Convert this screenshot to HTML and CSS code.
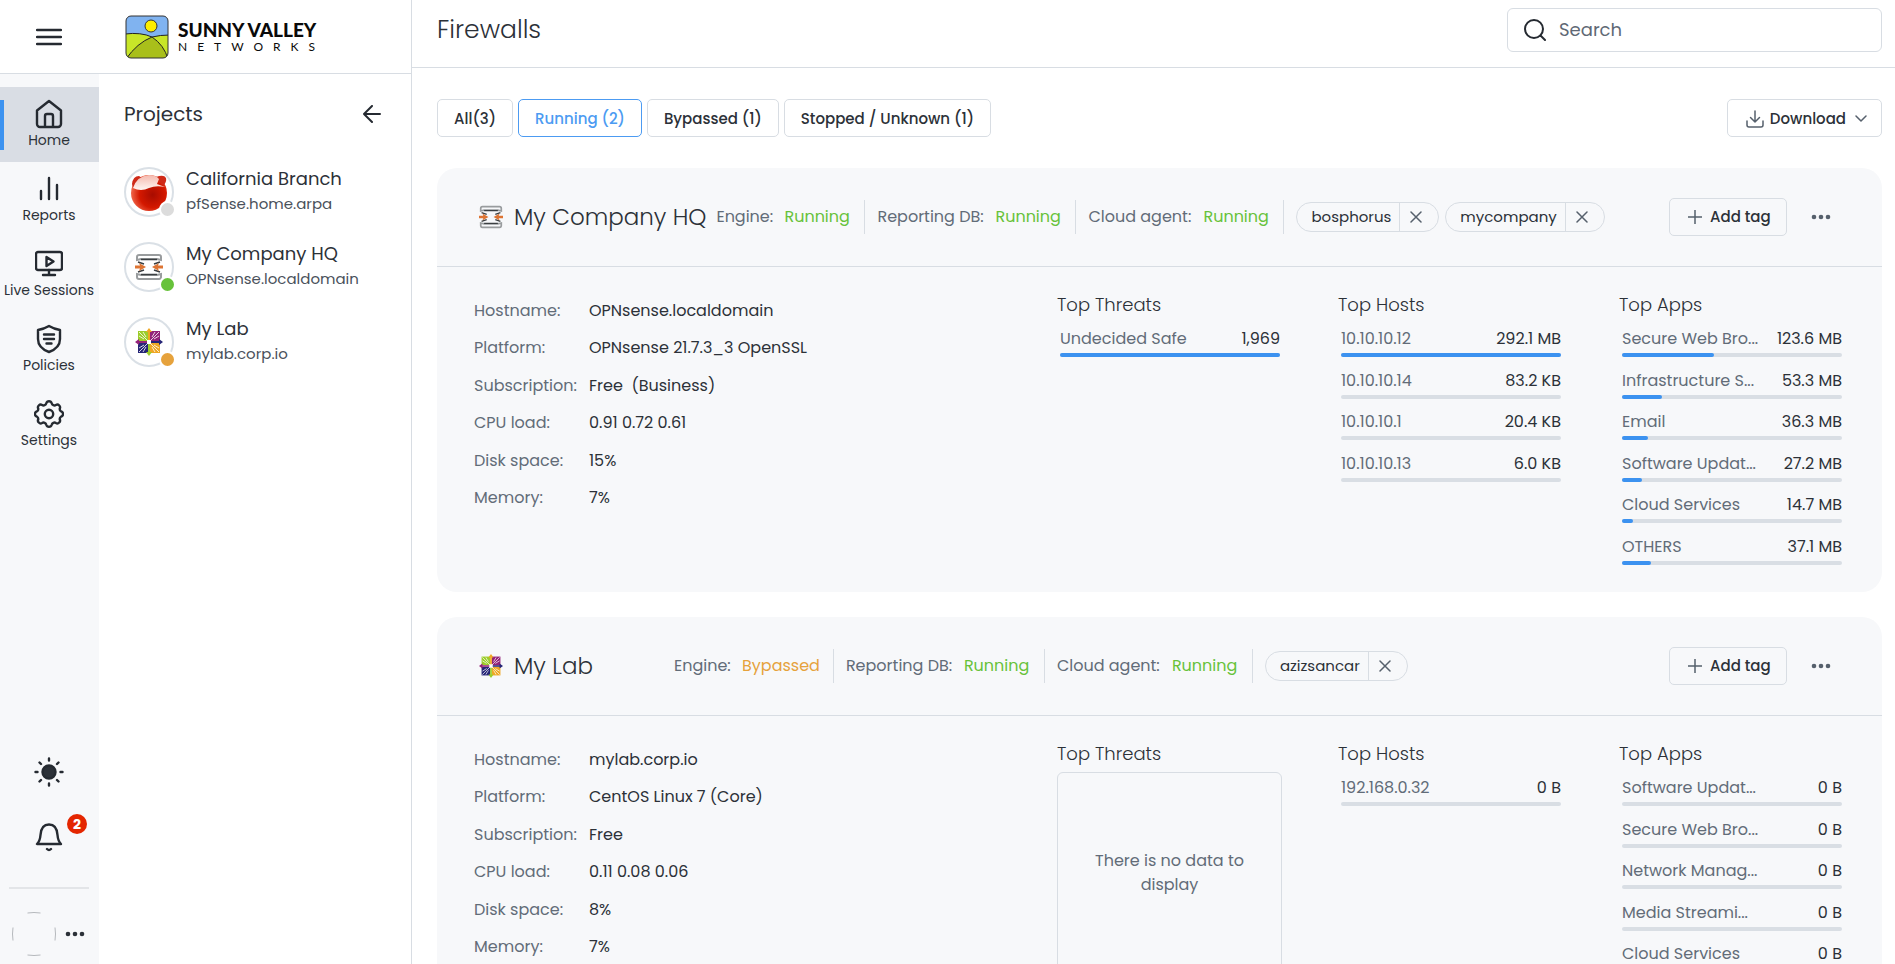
FILE: index.html
```
<!DOCTYPE html>
<html lang="en">
<head>
    <meta charset="UTF-8">
    <meta name="viewport" content="width=device-width, initial-scale=1.0">
    <title>Firewalls</title>
    <link rel="stylesheet" href="styles.css">
</head>
<body>
    <!-- shared icons -->
    <svg class="sprite" aria-hidden="true">
        <symbol id="i-close" viewBox="0 0 12 12"><path d="M1 1l10 10M11 1L1 11"/></symbol>
        <symbol id="i-plus" viewBox="0 0 14 14"><path d="M7 0v14M0 7h14"/></symbol>
        <symbol id="i-dots" viewBox="0 0 20 6">
            <circle cx="3" cy="3" r="2.300"/><circle cx="10" cy="3" r="2.300"/><circle cx="17" cy="3" r="2.300"/>
        </symbol>
        <symbol id="i-opnsense" viewBox="0 0 28 28">
            <g fill="none" stroke="#999c9e" stroke-width="2">
                <path d="M2 7V4q0-2 2-2h20q2 0 2 2v3l-4-1H6z"/>
                <path d="M2 21v3q0 2 2 2h20q2 0 2-2v-3l-4 1H6z"/>
            </g>
            <g fill="none" stroke="#3b3f42" stroke-width="1.600">
                <path d="M6 6.500h16M6 21.500h16M3 9l6 2M3 19l6-2M25 9l-6 2M25 19l-6-2"/>
            </g>
            <path fill="#dd7433" d="M0 12.500h5L4 10l7 4-7 4 1-2.500H0zM28 12.500h-5l1-2.500-7 4 7 4-1-2.500h5z"/>
        </symbol>
        <symbol id="i-centos" viewBox="0 0 28 28">
            <path fill="#9ccd2a" d="M3 3h10v10H3z"/>
            <path fill="#932279" d="M15 3h10v10H15z"/>
            <path fill="#262577" d="M3 15h10v10H3z"/>
            <path fill="#efa724" d="M15 15h10v10H15z"/>
            <path fill="none" stroke="#fff" stroke-width="0.800" d="M4 4l20 20M24 4L4 24M8 4l3 5M20 4l-3 5M4 8l5 3M24 8l-5 3M4 20l5-3M24 20l-5-3M8 24l3-5M20 24l-3-5"/>
            <path fill="#efa724" d="M14 0l3 4h-2v9h-2V4h-2z"/>
            <path fill="#262577" d="M28 14l-4 3v-2h-9v-2h9v-2z"/>
            <path fill="#9ccd2a" d="M14 28l-3-4h2v-9h2v9h2z"/>
            <path fill="#932279" d="M0 14l4-3v2h9v2H4v2z"/>
            <path fill="#fff" d="M12 12h4v4h-4z"/>
        </symbol>
    </svg>

    <div class="app">
        <!-- left side -->
        <aside class="sidebar">
            <div class="brand">
                <button class="icon-btn menu-btn" aria-label="Menu">
                    <svg class="icon" width="26" height="20" viewBox="0 0 26 20"><path d="M1 3h24M1 10h24M1 17h24"/></svg>
                </button>
                <a class="logo" href="#">
                    <svg width="44" height="44" viewBox="0 0 44 44">
                        <defs><clipPath id="logoClip"><rect x="1" y="1" width="42" height="42" rx="5"/></clipPath></defs>
                        <g clip-path="url(#logoClip)">
                            <path fill="#80b3f0" d="M0 0h44v44H0z"/>
                            <path fill="#c8e628" stroke="#222" stroke-width="1" d="M0 19q16-2 27 3 8-2 18-2v25H0z"/>
                            <path fill="#a9bf1a" stroke="#222" stroke-width="1" d="M1 44Q12 28 27 22q12 8 16 22z"/>
                        </g>
                        <circle cx="26" cy="11" r="6" fill="#fdee00" stroke="#333"/>
                        <rect x="1" y="1" width="42" height="42" rx="5" fill="none" stroke="#333"/>
                    </svg>
                    <span class="logo-text">
                        <span class="logo-name">SUNNY VALLEY</span>
                        <span class="logo-sub">NETWORKS</span>
                    </span>
                </a>
            </div>

            <div class="side-body">
                <nav class="rail">
                    <a class="rail-item active" href="#">
                        <svg class="icon" width="28" height="30" viewBox="0 0 28 30"><path d="M2 11.500L14 2l12 9.500V25a3 3 0 0 1-3 3H5a3 3 0 0 1-3-3zM10 28V17a2 2 0 0 1 2-2h4a2 2 0 0 1 2 2v11"/></svg>
                        <span>Home</span>
                    </a>
                    <a class="rail-item" href="#">
                        <svg class="icon" width="28" height="30" viewBox="0 0 28 30"><path d="M6 17v8M14 4v21M22 11v14"/></svg>
                        <span>Reports</span>
                    </a>
                    <a class="rail-item" href="#">
                        <svg class="icon" width="28" height="30" viewBox="0 0 28 30"><rect x="1" y="3" width="26" height="18" rx="2"/><path d="M14 21v5M8 26h12M11.500 8v9l7-4.500z"/></svg>
                        <span>Live Sessions</span>
                    </a>
                    <a class="rail-item" href="#">
                        <svg class="icon" width="28" height="30" viewBox="0 0 28 30"><path d="M14 2Q19 5 25 6v9q0 9-11 13Q3 24 3 15V6q6-1 11-4zM9 10.500h10M9 15h10M11.500 19.500h5"/></svg>
                        <span>Policies</span>
                    </a>
                    <a class="rail-item" href="#">
                        <svg class="icon" width="30" height="30" viewBox="0 0 30 30"><circle cx="15" cy="15" r="4.200"/><path d="M12.300 4.300a2.800 2.800 0 0 1 5.400 0 2.800 2.800 0 0 0 4.200 1.700 2.800 2.800 0 0 1 3.800 3.800 2.800 2.800 0 0 0 1.300 2.500 2.800 2.800 0 0 1 0 5.400 2.800 2.800 0 0 0-1.300 2.500 2.800 2.800 0 0 1-3.800 3.800 2.800 2.800 0 0 0-4.200 1.700 2.800 2.800 0 0 1-5.400 0 2.800 2.800 0 0 0-4.200-1.700 2.800 2.800 0 0 1-3.800-3.800A2.800 2.800 0 0 0 3 17.700a2.800 2.800 0 0 1 0-5.400 2.800 2.800 0 0 0 1.300-2.500 2.800 2.800 0 0 1 3.800-3.800 2.800 2.800 0 0 0 4.200-1.700z"/></svg>
                        <span>Settings</span>
                    </a>

                    <div class="rail-bottom">
                        <button class="icon-btn" aria-label="Theme">
                            <svg class="icon" width="32" height="32" viewBox="0 0 32 32"><circle cx="16" cy="16" r="6.500" fill="currentColor"/><path d="M16 2.500v2M16 27.500v2M2.500 16h2M27.500 16h2M6.500 6.500l1.500 1.500M24 24l1.500 1.500M25.500 6.500L24 8M8 24l-1.500 1.500"/></svg>
                        </button>
                        <button class="icon-btn bell-btn" aria-label="Notifications">
                            <svg class="icon" width="28" height="30" viewBox="0 0 28 30"><path d="M2 22h24q-3-3-3.500-9C22 6 19 2.500 14 2.500S6 6 5.500 13Q5 19 2 22zM12 27q2 2 4 0"/></svg>
                            <span class="badge">2</span>
                        </button>
                        <div class="account">
                            <svg width="44" height="44" viewBox="0 0 44 44" fill="none" stroke="#b5b8bc"><path d="M15.500 1q6.500-1 13 0M15.500 43q6.500 1 13 0M1 15.500q-1 6.500 0 13M43 15.500q1 6.500 0 13"/></svg>
                            <button class="icon-btn" aria-label="Account menu"><svg class="dots" width="20" height="6"><use href="#i-dots"/></svg></button>
                        </div>
                    </div>
                </nav>

                <section class="projects">
                    <div class="projects-head">
                        <h2>Projects</h2>
                        <button class="icon-btn" aria-label="Collapse">
                            <svg class="icon" width="18" height="18" viewBox="0 0 18 18"><path d="M17 9H1M9 1L1 9l8 8"/></svg>
                        </button>
                    </div>
                    <a class="project" href="#">
                        <span class="avatar">
                            <svg width="38" height="38" viewBox="0 0 38 38">
                                <defs>
                                    <radialGradient id="ball" cx="0.600" cy="0.550" r="0.600"><stop offset="0" stop-color="#a80c00"/><stop offset="0.600" stop-color="#d41800"/><stop offset="1" stop-color="#f0664a"/></radialGradient>
                                    <linearGradient id="shine" x1="0" y1="0" x2="0" y2="1"><stop offset="0" stop-color="#f4b9ae"/><stop offset="1" stop-color="#fff6f2"/></linearGradient>
                                </defs>
                                <circle cx="19" cy="20" r="18" fill="url(#ball)"/>
                                <path fill="#cf2a18" d="M2 11Q3 3 9 3l3 2-9 10zM26 4q8-3 10 1 1 4-3 8z"/>
                                <path fill="url(#shine)" d="M3 15Q7 3 19 2q7 0 10 4l-2 5 8 3q-9-2-16 1-8 4-16 0z"/>
                            </svg>
                            <i class="dot offline"></i>
                        </span>
                        <span class="project-text"><b>California Branch</b><small>pfSense.home.arpa</small></span>
                    </a>
                    <a class="project" href="#">
                        <span class="avatar"><svg width="28" height="28"><use href="#i-opnsense"/></svg><i class="dot running"></i></span>
                        <span class="project-text"><b>My Company HQ</b><small>OPNsense.localdomain</small></span>
                    </a>
                    <a class="project" href="#">
                        <span class="avatar"><svg width="28" height="28"><use href="#i-centos"/></svg><i class="dot bypassed"></i></span>
                        <span class="project-text"><b>My Lab</b><small>mylab.corp.io</small></span>
                    </a>
                </section>
            </div>
        </aside>

        <!-- main content -->
        <main class="main">
            <header class="topbar">
                <h1>Firewalls</h1>
                <label class="search">
                    <svg class="icon" width="22" height="22" viewBox="0 0 22 22"><circle cx="10" cy="10" r="9"/><path d="M16.500 16.500L21 21"/></svg>
                    <input type="text" placeholder="Search" aria-label="Search">
                </label>
            </header>

            <div class="toolbar">
                <button class="btn">All(3)</button>
                <button class="btn selected">Running (2)</button>
                <button class="btn">Bypassed (1)</button>
                <button class="btn">Stopped / Unknown (1)</button>
                <button class="btn download">
                    <svg class="icon thin" width="18" height="18" viewBox="0 0 18 18"><path d="M9 1v11M4.500 7.500L9 12l4.500-4.500M1 11v4a2 2 0 0 0 2 2h12a2 2 0 0 0 2-2v-4"/></svg>
                    <span>Download</span>
                    <svg class="icon thin" width="12" height="8" viewBox="0 0 12 8"><path d="M1 1l5 5 5-5"/></svg>
                </button>
            </div>

            <article class="card">
                <header class="card-head">
                    <svg class="card-logo" width="24" height="24"><use href="#i-opnsense"/></svg>
                    <h2>My Company HQ</h2>
                    <div class="status"><span class="key engine">Engine:</span><span class="val is-running">Running</span></div>
                    <div class="status"><span class="key db">Reporting DB:</span><span class="val is-running">Running</span></div>
                    <div class="status"><span class="key agent">Cloud agent:</span><span class="val is-running">Running</span></div>
                    <div class="tag"><span>bosphorus</span><button aria-label="Remove bosphorus"><svg class="icon thin" width="12" height="12"><use href="#i-close"/></svg></button></div>
                    <div class="tag"><span>mycompany</span><button aria-label="Remove mycompany"><svg class="icon thin" width="12" height="12"><use href="#i-close"/></svg></button></div>
                    <button class="btn add-tag"><svg class="icon thin" width="14" height="14"><use href="#i-plus"/></svg>Add tag</button>
                    <button class="icon-btn more" aria-label="More"><svg class="dots" width="20" height="6"><use href="#i-dots"/></svg></button>
                </header>
                <div class="card-body">
                    <dl class="info">
                        <dt>Hostname:</dt><dd>OPNsense.localdomain</dd>
                        <dt>Platform:</dt><dd>OPNsense 21.7.3_3 OpenSSL</dd>
                        <dt>Subscription:</dt><dd>Free&nbsp; (Business)</dd>
                        <dt>CPU load:</dt><dd>0.91 0.72 0.61</dd>
                        <dt>Disk space:</dt><dd>15%</dd>
                        <dt>Memory:</dt><dd>7%</dd>
                    </dl>
                    <section class="top">
                        <h3>Top Threats</h3>
                        <ul>
                            <li><span>Undecided Safe</span><b>1,969</b><div class="bar"><i style="width: 100%"></i></div></li>
                        </ul>
                    </section>
                    <section class="top">
                        <h3>Top Hosts</h3>
                        <ul>
                            <li><span>10.10.10.12</span><b>292.1 MB</b><div class="bar"><i style="width: 100%"></i></div></li>
                            <li><span>10.10.10.14</span><b>83.2 KB</b><div class="bar"></div></li>
                            <li><span>10.10.10.1</span><b>20.4 KB</b><div class="bar"></div></li>
                            <li><span>10.10.10.13</span><b>6.0 KB</b><div class="bar"></div></li>
                        </ul>
                    </section>
                    <section class="top">
                        <h3>Top Apps</h3>
                        <ul>
                            <li><span>Secure Web Bro...</span><b>123.6 MB</b><div class="bar"><i style="width: 42%"></i></div></li>
                            <li><span>Infrastructure S...</span><b>53.3 MB</b><div class="bar"><i style="width: 18%"></i></div></li>
                            <li><span>Email</span><b>36.3 MB</b><div class="bar"><i style="width: 12%"></i></div></li>
                            <li><span>Software Updat...</span><b>27.2 MB</b><div class="bar"><i style="width: 9%"></i></div></li>
                            <li><span>Cloud Services</span><b>14.7 MB</b><div class="bar"><i style="width: 5%"></i></div></li>
                            <li><span>OTHERS</span><b>37.1 MB</b><div class="bar"><i style="width: 13%"></i></div></li>
                        </ul>
                    </section>
                </div>
            </article>

            <article class="card">
                <header class="card-head">
                    <svg class="card-logo" width="24" height="24"><use href="#i-centos"/></svg>
                    <h2>My Lab</h2>
                    <div class="status"><span class="key engine">Engine:</span><span class="val is-bypassed">Bypassed</span></div>
                    <div class="status"><span class="key db">Reporting DB:</span><span class="val is-running">Running</span></div>
                    <div class="status"><span class="key agent">Cloud agent:</span><span class="val is-running">Running</span></div>
                    <div class="tag"><span>azizsancar</span><button aria-label="Remove azizsancar"><svg class="icon thin" width="12" height="12"><use href="#i-close"/></svg></button></div>
                    <button class="btn add-tag"><svg class="icon thin" width="14" height="14"><use href="#i-plus"/></svg>Add tag</button>
                    <button class="icon-btn more" aria-label="More"><svg class="dots" width="20" height="6"><use href="#i-dots"/></svg></button>
                </header>
                <div class="card-body">
                    <dl class="info">
                        <dt>Hostname:</dt><dd>mylab.corp.io</dd>
                        <dt>Platform:</dt><dd>CentOS Linux 7 (Core)</dd>
                        <dt>Subscription:</dt><dd>Free</dd>
                        <dt>CPU load:</dt><dd>0.11 0.08 0.06</dd>
                        <dt>Disk space:</dt><dd>8%</dd>
                        <dt>Memory:</dt><dd>7%</dd>
                    </dl>
                    <section class="top">
                        <h3>Top Threats</h3>
                        <p class="empty">There is no data to display</p>
                    </section>
                    <section class="top">
                        <h3>Top Hosts</h3>
                        <ul>
                            <li><span>192.168.0.32</span><b>0 B</b><div class="bar"></div></li>
                        </ul>
                    </section>
                    <section class="top">
                        <h3>Top Apps</h3>
                        <ul>
                            <li><span>Software Updat...</span><b>0 B</b><div class="bar"></div></li>
                            <li><span>Secure Web Bro...</span><b>0 B</b><div class="bar"></div></li>
                            <li><span>Network Manag...</span><b>0 B</b><div class="bar"></div></li>
                            <li><span>Media Streami...</span><b>0 B</b><div class="bar"></div></li>
                            <li><span>Cloud Services</span><b>0 B</b><div class="bar"></div></li>
                        </ul>
                    </section>
                </div>
            </article>
        </main>
    </div>
</body>
</html>
```

FILE: styles.css
```
* {
    box-sizing: border-box;
}

body {
    margin: 0;
    font-family: Poppins, Inter, sans-serif;
    font-size: 16px;
    line-height: 24px;
    color: #2c3138;
    background-color: #fff;
}

h1, h2, h3, p, ul, dl, dd {
    margin: 0;
    padding: 0;
    font-weight: 400;
}

ul {
    list-style: none;
}

a {
    color: inherit;
    text-decoration: none;
}

button, input {
    font: inherit;
    color: inherit;
}

.sprite {
    display: none;
}

/* icons */
.icon {
    flex: none;
    fill: none;
    stroke: #252a31;
    stroke-width: 2;
    stroke-linecap: round;
    stroke-linejoin: round;
}

.thin {
    stroke: #56606c;
    stroke-width: 1.5;
}

.brand .icon, .rail .icon {
    stroke-width: 2.4;
}

.dots {
    fill: currentColor;
}

.icon-btn {
    display: flex;
    align-items: center;
    justify-content: center;
    padding: 0;
    border: none;
    background: none;
    cursor: pointer;
}

.app {
    display: flex;
    height: 100vh;
    overflow: hidden;
}

/* sidebar */
.sidebar {
    display: flex;
    flex-direction: column;
    flex: none;
    width: 412px;
    border-right: 1px solid #d8dde3;
}

.brand {
    display: flex;
    align-items: center;
    height: 74px;
    border-bottom: 1px solid #d8dde3;
}

.menu-btn {
    width: 98px;
    margin-right: 27px;
}

.logo {
    display: flex;
    align-items: center;
    gap: 9px;
    color: #0a0a0a;
    font-family: Lato, sans-serif;
}

.logo-text {
    display: flex;
    flex-direction: column;
}

.logo-name {
    font-size: 19px;
    font-weight: 900;
    line-height: 20px;
}

.logo-sub {
    font-size: 12px;
    line-height: 14px;
    letter-spacing: 10px;
}

.side-body {
    display: flex;
    flex: 1;
}

.rail {
    display: flex;
    flex-direction: column;
    width: 99px;
    padding-top: 13px;
    background-color: #f7f8fa;
}

.rail-item {
    display: flex;
    flex-direction: column;
    align-items: center;
    height: 75px;
    padding: 12px 1px 0 0;
    font-size: 14px;
    line-height: 22px;
    white-space: nowrap;
}

.rail-item.active {
    background: linear-gradient(#3c92f0, #3c92f0) left center / 4px 50px no-repeat #d9dde4;
}

.rail-bottom {
    display: flex;
    flex-direction: column;
    align-items: center;
    gap: 32px;
    margin-top: auto;
    padding: 0 1px 8px 0;
}

.bell-btn {
    position: relative;
    width: 80px;
    height: 34px;
}

.badge {
    position: absolute;
    top: -6px;
    right: 2px;
    width: 20px;
    height: 20px;
    border-radius: 50%;
    background-color: #e42600;
    color: #fff;
    font-size: 14px;
    font-weight: 700;
    line-height: 20px;
}

.account {
    display: flex;
    align-items: center;
    justify-content: space-between;
    width: 80px;
    margin-top: 1px;
    padding: 23px 4px 0 3px;
    border-top: 2px solid #e3e5e8;
}

/* projects list */
.projects {
    flex: 1;
    padding: 24px 30px 0 25px;
}

.projects-head {
    display: flex;
    align-items: center;
    justify-content: space-between;
    height: 32px;
    margin-bottom: 37px;
}

.projects-head h2 {
    font-size: 20px;
}

.project {
    display: flex;
    align-items: center;
    gap: 12px;
    height: 50px;
    margin-bottom: 25px;
}

.avatar {
    position: relative;
    display: flex;
    align-items: center;
    justify-content: center;
    width: 50px;
    height: 50px;
    border: 2px solid #dae0e6;
    border-radius: 50%;
}

.dot {
    position: absolute;
    right: -4px;
    bottom: -3px;
    width: 17px;
    height: 17px;
    border: 2px solid #fff;
    border-radius: 50%;
}

.dot.offline {
    background-color: #dcdcdc;
}

.dot.running {
    background-color: #67c23a;
}

.dot.bypassed {
    background-color: #e6a23c;
}

.project-text b, .project-text small {
    display: block;
    font-weight: 400;
}

.project-text b {
    font-size: 18px;
}

.project-text small {
    color: #4a515b;
    font-size: 15px;
    line-height: 26px;
}

/* main */
.main {
    flex: 1;
    min-width: 0;
}

.topbar {
    display: flex;
    justify-content: space-between;
    height: 68px;
    padding: 8px 13px 0 25px;
    border-bottom: 1px solid #d8dde3;
}

.topbar h1 {
    font-size: 25px;
    font-weight: 300;
    line-height: 44px;
}

.search {
    display: flex;
    align-items: center;
    gap: 13px;
    width: 375px;
    height: 44px;
    padding: 0 16px;
    border: 1px solid #d8dde3;
    border-radius: 6px;
}

.search input {
    flex: 1;
    min-width: 0;
    padding: 0;
    border: none;
    outline: none;
    font-size: 18px;
}

.search input::placeholder {
    color: #5f6975;
    opacity: 1;
}

.btn {
    height: 38px;
    padding: 2px 16px 0;
    border: 1px solid #d8dde3;
    border-radius: 5px;
    background-color: transparent;
    font-size: 15px;
    font-weight: 500;
    white-space: nowrap;
    cursor: pointer;
}

.btn.selected {
    border-color: #4c9bf2;
    color: #4c9bf2;
}

.toolbar {
    display: flex;
    gap: 5px;
    padding: 31px 13px 31px 25px;
}

.download {
    display: flex;
    align-items: center;
    margin-left: auto;
    padding: 1px 14px 0 18px;
}

.download span {
    margin: 0 9px 0 6px;
}

/* firewall cards */
.card {
    margin: 0 13px 25px 25px;
    border-radius: 20px;
    background-color: #f7f8fa;
}

.card-head {
    display: flex;
    align-items: center;
    height: 99px;
    padding: 0 51px 0 42px;
    border-bottom: 1px solid #d8dde3;
}

.card-head h2 {
    min-width: 150px;
    margin: 0 10px 0 11px;
    font-size: 23px;
    font-weight: 300;
    white-space: nowrap;
}

.status {
    display: flex;
    align-items: center;
    height: 34px;
    margin-right: 12px;
    padding-right: 13px;
    border-right: 1px solid #d8dde3;
    white-space: nowrap;
}

.key {
    color: #626c78;
}

.key.engine {
    min-width: 68px;
}

.key.db {
    min-width: 118px;
}

.key.agent {
    min-width: 115px;
}

.val {
    min-width: 67px;
}

.is-running {
    color: #67c23a;
}

.is-bypassed {
    color: #e6a23c;
}

.tag {
    display: flex;
    height: 30px;
    margin-right: 6px;
    border: 1px solid #d8dde3;
    border-radius: 16px;
    font-size: 15px;
    line-height: 28px;
}

.tag span {
    padding: 0 8px 0 14px;
}

.tag button {
    width: 39px;
    padding: 0 6px 0 0;
    border: none;
    border-left: 1px solid #d8dde3;
    background: none;
    line-height: 0;
    cursor: pointer;
}

.add-tag {
    display: flex;
    align-items: center;
    gap: 8px;
    width: 118px;
    margin-left: auto;
    padding: 0 0 0 18px;
}

.more {
    margin-left: 24px;
    color: #56606c;
}

.card-body {
    display: grid;
    grid-template-columns: 1fr repeat(3, 225px);
    column-gap: 56px;
    padding: 24px 38px 16px 37px;
}

.info {
    display: grid;
    grid-template-columns: 115px 1fr;
    grid-template-rows: repeat(6, 1fr);
    align-items: center;
    height: 226px;
    padding-top: 1px;
}

.info dt {
    color: #626c78;
}

.top h3 {
    margin-bottom: 4px;
    font-size: 18px;
    font-weight: 300;
    line-height: 28px;
}

.top ul {
    display: grid;
    grid-template-rows: repeat(6, 1fr);
    height: 253px;
    padding: 4px 2px 0 3px;
}

.top li {
    display: flex;
    flex-wrap: wrap;
    justify-content: space-between;
    align-content: flex-start;
}

.top li span {
    color: #626c78;
}

.top li b {
    font-weight: 400;
}

.bar {
    width: 100%;
    height: 4px;
    margin-top: 2px;
    border-radius: 2px;
    background-color: #d9dee4;
}

.bar i {
    display: block;
    height: 4px;
    border-radius: 2px;
    background-color: #3c92f0;
}

.empty {
    display: flex;
    align-items: center;
    height: 202px;
    padding: 0 24px;
    border: 1px solid #d8dde3;
    border-radius: 6px;
    color: #626c78;
    text-align: center;
}
```
